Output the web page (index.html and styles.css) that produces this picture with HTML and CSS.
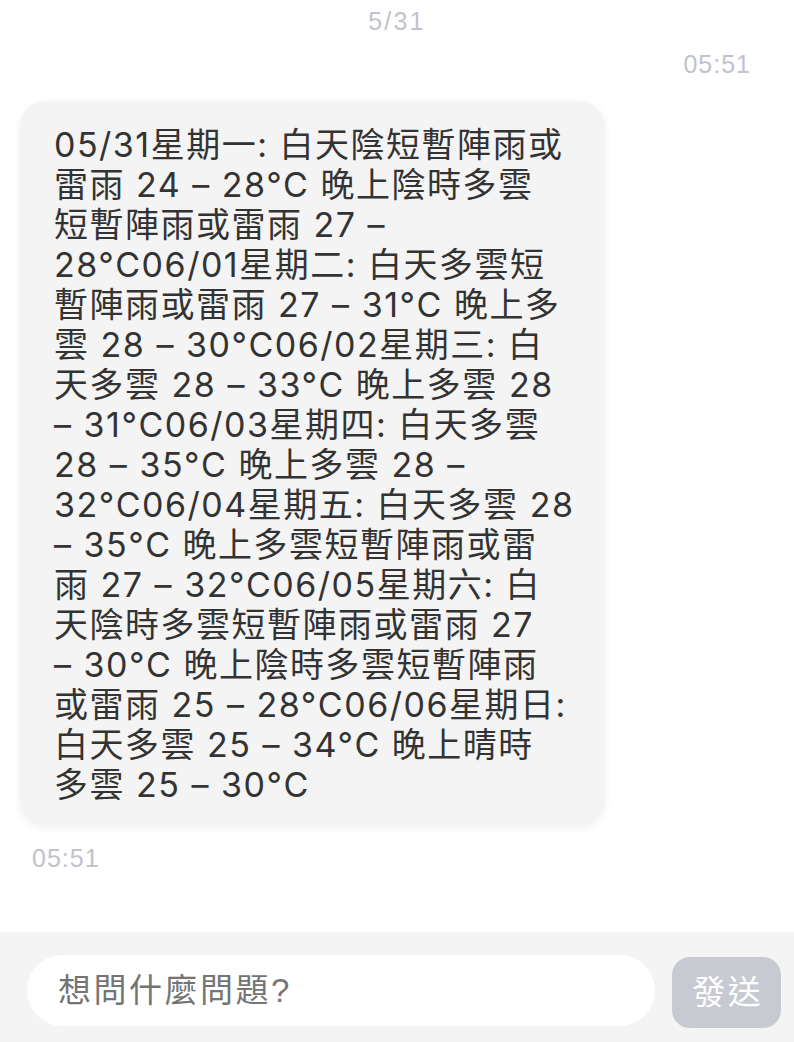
FILE: index.html
```html
<!DOCTYPE html>
<html lang="zh-Hant">
<head>
<meta charset="utf-8">
<link rel="stylesheet" href="styles.css">
</head>
<body>
<div class="page">
  <div class="chat">
    <div class="date">5/31</div>
    <div class="time time-right">05:51</div>
    <div class="bubble">05/31星期一: 白天陰短暫陣雨或<br>雷雨 24 – 28°C 晚上陰時多雲<br>短暫陣雨或雷雨 27 –<br>28°C06/01星期二: 白天多雲短<br>暫陣雨或雷雨 27 – 31°C 晚上多<br>雲 28 – 30°C06/02星期三: 白<br>天多雲 28 – 33°C 晚上多雲 28<br>– 31°C06/03星期四: 白天多雲<br>28 – 35°C 晚上多雲 28 –<br>32°C06/04星期五: 白天多雲 28<br>– 35°C 晚上多雲短暫陣雨或雷<br>雨 27 – 32°C06/05星期六: 白<br>天陰時多雲短暫陣雨或雷雨 27<br>– 30°C 晚上陰時多雲短暫陣雨<br>或雷雨 25 – 28°C06/06星期日:<br>白天多雲 25 – 34°C 晚上晴時<br>多雲 25 – 30°C</div>
    <div class="time time-left">05:51</div>
  </div>
  <div class="composer">
    <div class="input">想問什麼問題?</div>
    <div class="send">發送</div>
  </div>
</div>
</body>
</html>
```
FILE: styles.css
```css
html, body {
  margin: 0;
  padding: 0;
  background: #ffffff;
}
body {
  font-family: "Liberation Sans", "Noto Sans CJK TC", sans-serif;
}
.page {
  height: 1042px;
  display: flex;
  flex-direction: column;
}
.chat {
  flex: 1;
  overflow: hidden;
}
.date {
  padding-top: 6px;
  line-height: 30px;
  font-size: 25px;
  letter-spacing: 2.2px;
  color: #c2c2cc;
  text-align: center;
}
.time {
  line-height: 30px;
  font-size: 25px;
  letter-spacing: 1px;
  color: #c2c2cc;
}
.time-right {
  margin-top: 13px;
  text-align: right;
  padding-right: 43px;
}
.bubble {
  margin: 22px 0 0 20px;
  width: 521px;
  padding: 24px 30px 21px 34px;
  background: #f4f4f4;
  border-radius: 26px;
  box-shadow: 0 2px 8px rgba(0, 0, 0, 0.06);
  font-family: "Inter", "Noto Sans CJK TC", sans-serif;
  font-size: 34px;
  letter-spacing: 1.5px;
  line-height: 40px;
  color: #333333;
  white-space: nowrap;
}
.time-left {
  margin-top: 17px;
  padding-left: 32px;
}
.composer {
  height: 110px;
  box-sizing: border-box;
  background: #f4f4f4;
  padding: 23px 13px 0 27px;
  display: flex;
  align-items: flex-start;
  gap: 17px;
}
.input {
  flex: 1;
  height: 71px;
  background: #ffffff;
  border-radius: 36px;
  padding-left: 31px;
  font-size: 33px;
  letter-spacing: 2.5px;
  line-height: 71px;
  color: #747474;
}
.send {
  margin-top: 2px;
  width: 109px;
  height: 71px;
  border-radius: 18px;
  background: #c8cad1;
  color: #ffffff;
  font-size: 33px;
  letter-spacing: 2.5px;
  text-indent: 2.5px;
  line-height: 71px;
  text-align: center;
}
```
